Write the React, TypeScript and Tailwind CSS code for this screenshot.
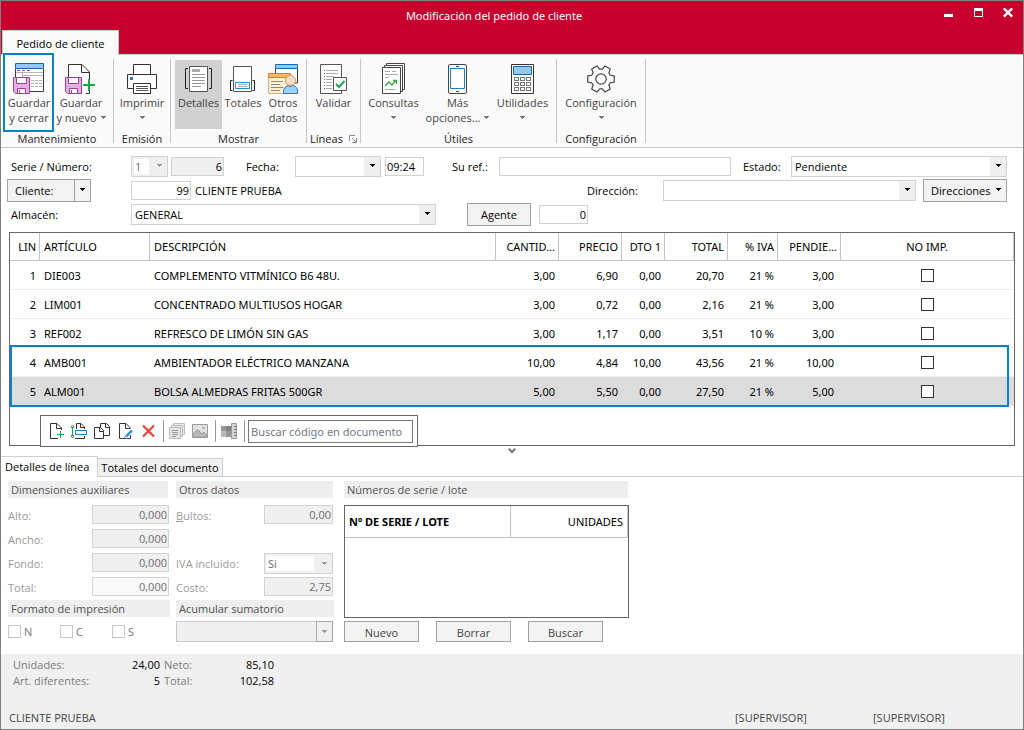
import type { ReactNode } from "react";

const GRAY_FIELD = "border-[#d2d2d2] bg-[#f0f0f0] text-[#6d6d6d]";

function Caret({ className = "" }: { className?: string }) {
  return (
    <svg width="5" height="4" viewBox="0 0 5 4" className={`shrink-0 fill-current ${className}`} aria-hidden="true">
      <path d="M0 0h5v1H4v1H3v1H2V2H1V1H0z" />
    </svg>
  );
}

/* ---------- Ribbon icons ---------- */

function Floppy() {
  return (
    <g stroke="#9b3f9b" fill="#dfb3dd">
      <path d="M.5 14.500H16.500V30.500H2.500L.500 28.500Z" />
      <path d="M3.500 14.500H13.500V20.500H3.500Z" fill="#fff" />
      <path d="M4.500 30.500V25.500H12.500V30.500Z" fill="#fff" />
      <path d="M6.500 27V30" />
    </g>
  );
}

function SaveCloseIcon() {
  return (
    <svg width="32" height="32" viewBox="0 0 32 32" fill="none" aria-hidden="true">
      <path d="M2.500 6V28.500H30.500V6" fill="#fff" stroke="#3a3a3a" />
      <path d="M2.500.5H30.500V5.500H2.500Z" fill="#92c9f0" stroke="#1466ad" />
      <path d="M4 7.500H7M9 7.500H12M14 7.500H17" stroke="#707070" />
      <path d="M3 9.500H30M9.500 10V14M9 12.500H30" stroke="#b5b5b5" />
      <path d="M18 17.500H29M18 20.500H29M18 23.500H29" stroke="#b0b0b0" strokeDasharray="3 1" />
      <Floppy />
    </svg>
  );
}

function SaveNewIcon() {
  return (
    <svg width="32" height="32" viewBox="0 0 32 32" fill="none" aria-hidden="true">
      <path d="M3.500 30V1.500H17L24.500 9V30H3.500Z" fill="#fff" />
      <path d="M3.500 14V1.500H17L24.500 9V16M21 30.500H24.500V28" stroke="#333" />
      <path d="M16.500 1.500V9.500H24.500" stroke="#333" />
      <path d="M24 16V28M18 22H30" stroke="#17a84b" strokeWidth="2" />
      <Floppy />
    </svg>
  );
}

function PrinterIcon() {
  return (
    <svg width="30" height="32" viewBox="0 0 30 32" fill="none" stroke="#333" aria-hidden="true">
      <path d="M6.500 11V1.500H23.500V11" fill="#fff" />
      <path d="M.5 11.500H29.500V25.500H.5Z" fill="#fff" />
      <path d="M6.500 20.500H23.500V30.500H6.500Z" fill="#fff" />
      <path d="M9 23.500H21M9 25.500H21M9 27.500H21" stroke="#555" />
      <path d="M3 14H6V17H3Z" fill="#1a7fd0" stroke="none" />
    </svg>
  );
}

function DetailIcon() {
  return (
    <svg width="32" height="32" viewBox="0 0 32 32" fill="none" stroke="#222" aria-hidden="true">
      <path d="M6.500 3.500H24.500V28.500H6.500Z" fill="#fff" stroke="#555" />
      <path d="M9 6H17V9H9Z" fill="#aaa" stroke="none" />
      <path d="M9 11.500H22M9 14.500H22M9 17.500H22M9 20.500H22M9 23.500H18" stroke="#999" />
      <path d="M5 5.500H2.500V25.500H5M26 5.500H28.500V25.500H26" />
    </svg>
  );
}

function TotalsIcon() {
  return (
    <svg width="30" height="32" viewBox="0 0 30 32" fill="none" stroke="#222" aria-hidden="true">
      <path d="M5.500 3.500H23.500V28.500H5.500Z" fill="#fff" stroke="#555" />
      <path d="M4.500 17.500H2.500V27.500H4.500M24.500 17.500H26.500V27.500H24.500" />
      <path d="M7.500 19.500H21.500V25.500H7.500Z" stroke="#1a90d8" />
      <path d="M10 21.500H19M10 23.500H19" stroke="#aaa" />
    </svg>
  );
}

function OtherDataIcon() {
  return (
    <svg width="31" height="32" viewBox="0 0 31 32" fill="none" aria-hidden="true">
      <path d="M7.500 6V20H29.500V6" fill="#fff" stroke="#3a3a3a" />
      <path d="M7.500 1.500H29.500V5.500H7.500Z" fill="#92c9f0" stroke="#1466ad" />
      <path d="M.5 14V30.500H22.500V14" fill="#fff0d2" stroke="#c9b48a" />
      <path d="M.5 10.500H22.500V14.500H.5Z" fill="#fdb56c" stroke="#e2742c" />
      <path d="M3 18.500H15M3 21.500H12M3 24.500H15M3 27.500H12" stroke="#888" />
      <circle cx="22.500" cy="17.500" r="5" fill="#fbdcc0" stroke="#dd9668" />
      <path d="M15.500 30.500V28Q16 23.500 20 22.500Q22.500 25 25 22.500Q29.500 23.500 29.500 28V30.500Z" fill="#a5cff0" stroke="#2c7cc0" />
    </svg>
  );
}

function ValidateIcon() {
  return (
    <svg width="28" height="32" viewBox="0 0 28 32" fill="none" stroke="#555" aria-hidden="true">
      <path d="M.5 1.500H21.500V30.500H.5Z" fill="#fff" />
      <path d="M6 7.500H18M6 10.500H18M6 13.500H14M6 16.500H12M6 19.500H12M6 22.500H12M6 25.500H12" stroke="#aaa" />
      <path d="M4 7.500H5M4 13.500H5M4 16.500H5M4 22.500H5" stroke="#189a44" />
      <path d="M4 10.500H5M4 19.500H5M4 25.500H5" stroke="#d11c35" />
      <path d="M13.500 14.500H26.500V27.500H13.500Z" fill="#fff" />
      <path d="M16 21L19 24L24.500 18" stroke="#1ba650" strokeWidth="2" />
    </svg>
  );
}

function QueriesIcon() {
  return (
    <svg width="24" height="32" viewBox="0 0 24 32" fill="#fff" stroke="#444" aria-hidden="true">
      <path d="M4.500.5H22.500V26.500H4.500Z" />
      <path d="M2.500 2.500H20.500V28.500H2.500Z" />
      <path d="M.5 4.500H18.500V30.500H.5Z" />
      <path d="M3 8.500H8M10 8.500H14M3 11.500H16M3 14.500H7M3 26.500H13" stroke="#aaa" />
      <path d="M3 23L7 19L10 22L14.500 17M11 17.500H14.500V21" fill="none" stroke="#35a844" strokeWidth="1.300" />
    </svg>
  );
}

function PhoneIcon() {
  return (
    <svg width="19" height="32" viewBox="0 0 19 32" fill="#fff" stroke="#444" aria-hidden="true">
      <rect x=".5" y="1.500" width="18" height="29" rx="1.500" />
      <path d="M2.500 5.500H16.500V25.500H2.500Z" stroke="#1a7fc4" />
      <path d="M8 3.500H11M8 28.500H11" />
    </svg>
  );
}

function CalculatorIcon() {
  return (
    <svg width="23" height="32" viewBox="0 0 23 32" fill="#fff" stroke="#333" aria-hidden="true">
      <path d="M.5 1.500H22.500V30.500H.5Z" />
      <path d="M2.500 3.500H20.500V11.500H2.500Z" fill="#92c9f0" stroke="#1466ad" />
      {[14.5, 19.5, 24.5].map((y) =>
        [3.5, 9.5, 15.5].map((x) => <rect key={`${x}-${y}`} x={x} y={y} width="4" height="3" stroke="#777" />),
      )}
    </svg>
  );
}

const gearPoints = Array.from({ length: 6 }, (_, tooth) =>
  [
    [10, -22],
    [13.6, -13],
    [13.6, 13],
    [10, 22],
  ].map(([radius, angle]) => {
    const rad = ((tooth * 60 + angle) * Math.PI) / 180;
    return `${(15 + radius * Math.cos(rad)).toFixed(2)},${(16 + radius * Math.sin(rad)).toFixed(2)}`;
  }),
)
  .flat()
  .join(" ");

function GearIcon() {
  return (
    <svg width="30" height="32" viewBox="0 0 30 32" fill="none" stroke="#444" strokeWidth="1.200" strokeLinejoin="round" aria-hidden="true">
      <polygon points={gearPoints} fill="#fff" />
      <circle cx="15" cy="16" r="5.200" />
    </svg>
  );
}

/* ---------- Line toolbar icons ---------- */

function NewLineIcon() {
  return (
    <svg width="15" height="18" viewBox="0 0 15 18" fill="none" stroke="#333" aria-hidden="true">
      <path d="M8 16.500H.5V1.500H7L11.500 6V8M6.500 1.500V6.500H11" />
      <path d="M10.500 9V16M7 12.500H14" stroke="#17a84b" />
    </svg>
  );
}

function InsertLineIcon() {
  return (
    <svg width="17" height="18" viewBox="0 0 17 18" fill="none" stroke="#333" aria-hidden="true">
      <path d="M4 16.500H13.500V14M5.500 7V1.500H10L13.500 5V7M9.500 1.500V5.500H13" />
      <path d="M1.500 5V14M0 5.500H3M0 13.500H3" stroke="#17a84b" />
      <path d="M0 5L1.500 3L3 5M0 14L1.500 16L3 14" stroke="#17a84b" />
      <path d="M4.500 8.500H15.500V12.500H4.500Z" fill="#fff" stroke="#1a7fc4" />
    </svg>
  );
}

function CopyLineIcon() {
  return (
    <svg width="17" height="18" viewBox="0 0 17 18" fill="#fff" stroke="#333" aria-hidden="true">
      <path d="M6.500 1.500H12.500L15.500 4.500V13.500H6.500Z" />
      <path d="M11.500 1.500V5.500H15.500" />
      <path d="M.5 5.500H6.500L9.500 8.500V16.500H.5Z" />
      <path d="M5.500 5.500V9.500H9.500" />
    </svg>
  );
}

function EditLineIcon() {
  return (
    <svg width="15" height="18" viewBox="0 0 15 18" fill="none" stroke="#333" aria-hidden="true">
      <path d="M.5 1.500H7L11.500 6V16.500H.5Z" />
      <path d="M6.500 1.500V6.500H11" />
      <path d="M6 15L13 8" stroke="#fff" strokeWidth="5" />
      <path d="M7 14.500L13 8.500" stroke="#3b95d6" strokeWidth="2.600" />
      <path d="M5 16.500L6.500 14" stroke="#3b95d6" />
    </svg>
  );
}

function DeleteLineIcon() {
  return (
    <svg width="14" height="14" viewBox="0 0 14 14" fill="none" stroke="#e8423f" strokeWidth="2.200" aria-hidden="true">
      <path d="M1 1.500L12 12.500M12 1.500L1 12.500" />
    </svg>
  );
}

function NotesIcon() {
  return (
    <svg width="16" height="16" viewBox="0 0 16 16" fill="#e6e6e6" stroke="#bdbdbd" aria-hidden="true">
      <path d="M4.500 .5H15.500V11.500H4.500Z" />
      <path d="M2.500 2.500H13.500V13.500H2.500Z" />
      <path d="M.5 4.500H11.500V15.500H.5Z" />
      <path d="M3 7.500H9M3 9.500H9M3 11.500H9M3 13.500H7" stroke="#999" />
    </svg>
  );
}

function ImageIcon() {
  return (
    <svg width="16" height="14" viewBox="0 0 16 14" fill="#e2e2e2" stroke="#9c9c9c" aria-hidden="true">
      <path d="M.5 .5H15.500V13.500H.5Z" />
      <path d="M1 10L5.500 5.500L10 10L12 8L15 11V13H1Z" fill="#b8b8b8" />
      <circle cx="11.500" cy="4" r="1.300" fill="#b0b0b0" stroke="none" />
    </svg>
  );
}

function SizesIcon() {
  return (
    <svg width="17" height="16" viewBox="0 0 17 16" fill="none" aria-hidden="true">
      <path d="M0 3H10V14H0Z" fill="#999" />
      <path d="M0 8H5V14H0Z" fill="#bbb" />
      <path d="M5 3H10V8H5Z" fill="#828282" />
      <path d="M10.500 .5H15.500V15.500H10.500Z" fill="#d4d4d4" stroke="#999" />
      <path d="M13 3.500H15M13 6.500H15M13 9.500H15M13 12.500H15" stroke="#777" />
    </svg>
  );
}

/* ---------- Ribbon ---------- */

function RibbonButton({
  icon,
  lines,
  menu = false,
  active = false,
  className,
}: {
  icon: ReactNode;
  lines: string[];
  menu?: boolean;
  active?: boolean;
  className: string;
}) {
  const alone = menu && lines.length === 1;
  return (
    <button
      type="button"
      className={`flex h-[69px] flex-col items-center whitespace-nowrap pt-[3px] leading-[15px] text-[#444] ${active ? "bg-[#d1d1d1]" : ""} ${className}`}
    >
      <span className="flex h-8 items-start">{icon}</span>
      <span>{lines[0]}</span>
      {lines.length > 1 && (
        <span className="flex items-center gap-1">
          {lines[1]}
          {menu && <Caret className="text-[#777]" />}
        </span>
      )}
      {alone && (
        <span className="flex h-[15px] items-center">
          <Caret className="text-[#777]" />
        </span>
      )}
    </button>
  );
}

function RibbonGroup({ title, className, children, launcher = false }: { title: string; className: string; children: ReactNode; launcher?: boolean }) {
  return (
    <section className="flex">
      <div className={`flex flex-col pt-[5px] ${className}`}>
        <div className="flex justify-center">{children}</div>
        <div className="flex items-center justify-center gap-1.5 pt-0.5 leading-[15px] text-[#222]">
          {title}
          {launcher && (
            <svg width="8" height="8" viewBox="0 0 8 8" fill="none" stroke="#8a8a8a" aria-hidden="true">
              <path d="M.5 6V.5H6M3 3L7 7M7.500 3V7.500H3" />
            </svg>
          )}
        </div>
      </div>
      <div className="my-1 w-px bg-[#c6c6c6]" />
    </section>
  );
}

/* ---------- Form controls ---------- */

function Dropdown({
  id,
  value,
  label,
  className,
  disabled = false,
}: {
  id: string;
  value: string;
  label?: string;
  className: string;
  disabled?: boolean;
}) {
  return (
    <div className={`relative flex h-[21px] border border-[#d2d2d2] ${disabled ? "bg-[#f0f0f0] p-0.5 text-[#6d6d6d]" : "bg-white text-black"} ${className}`}>
      <select
        id={id}
        aria-label={label}
        disabled={disabled}
        className={`w-full appearance-none opacity-100 outline-none ${disabled ? "mr-4 bg-white pl-px" : "pr-4 pl-[3px]"}`}
      >
        <option>{value}</option>
      </select>
      <span
        className={`pointer-events-none absolute inset-y-0 right-0 flex w-4 items-center justify-center bg-[#efefef] ${disabled ? "text-[#999]" : "text-black"}`}
      >
        <Caret />
      </span>
    </div>
  );
}

function NumberField({ id, value, label, className, readOnly }: { id: string; value: string; label?: string; className: string; readOnly?: boolean }) {
  return (
    <input
      id={id}
      aria-label={label}
      defaultValue={value}
      readOnly={readOnly}
      className={`border px-px text-right outline-none ${className}`}
    />
  );
}

const WHITE_FIELD = "border-[#d2d2d2] bg-white text-black";
const PUSH = "border border-[#a0a0a0] bg-[#f3f3f3]";

/* ---------- Order lines ---------- */

const lines = [
  ["1", "DIE003", "COMPLEMENTO VITMÍNICO B6 48U.", "3,00", "6,90", "0,00", "20,70", "21 %", "3,00"],
  ["2", "LIM001", "CONCENTRADO MULTIUSOS HOGAR", "3,00", "0,72", "0,00", "2,16", "21 %", "3,00"],
  ["3", "REF002", "REFRESCO DE LIMÓN SIN GAS", "3,00", "1,17", "0,00", "3,51", "10 %", "3,00"],
  ["4", "AMB001", "AMBIENTADOR ELÉCTRICO MANZANA", "10,00", "4,84", "10,00", "43,56", "21 %", "10,00"],
  ["5", "ALM001", "BOLSA ALMEDRAS FRITAS 500GR", "5,00", "5,50", "0,00", "27,50", "21 %", "5,00"],
];

const columns = [
  { title: "LIN", width: "w-[30px]", right: true },
  { title: "ARTÍCULO", width: "w-[110px]", right: false },
  { title: "DESCRIPCIÓN", width: "", right: false },
  { title: "CANTID...", width: "w-[63px]", right: true },
  { title: "PRECIO", width: "w-[63px]", right: true },
  { title: "DTO 1", width: "w-[43px]", right: true },
  { title: "TOTAL", width: "w-[63px]", right: true },
  { title: "% IVA", width: "w-[50px]", right: true },
  { title: "PENDIE...", width: "w-[63px]", right: true },
];

function OrderLines() {
  return (
    <div className="relative mx-[8px] mt-1.5 h-[214px] border border-[#666]">
      <table className="w-full table-fixed border-separate border-spacing-0 font-['Noto_Sans',sans-serif] leading-none">
        <thead>
          <tr className="h-[28px]">
            {columns.map((c) => (
              <th
                key={c.title}
                className={`border-r border-b border-[#c4c4c4] py-0 font-normal whitespace-nowrap ${c.width} ${c.right ? "pr-[3px] text-right" : "px-1 text-left"}`}
              >
                {c.title}
              </th>
            ))}
            <th className="w-[173px] border-r border-b border-[#c4c4c4] p-0 text-center font-normal">NO IMP.</th>
          </tr>
        </thead>
        <tbody>
          {lines.map((row, i) => (
            <tr key={row[0]} className={`h-[29px] ${i === 4 ? "bg-[#dcdcdc]" : ""}`}>
              {row.map((cell, c) => (
                <td
                  key={c}
                  className={`border-b border-[#ededed] py-0 whitespace-nowrap ${columns[c].right ? "text-right" : "text-left"} ${c === 8 ? "pr-[7px]" : "px-1"}`}
                >
                  {cell}
                </td>
              ))}
              <td className="border-b border-[#ededed] p-0">
                <input
                  type="checkbox"
                  aria-label={`No imprimir línea ${row[0]}`}
                  className="mx-auto block size-[13px] appearance-none border border-[#333] bg-white"
                />
              </td>
            </tr>
          ))}
        </tbody>
      </table>

      <div className="pointer-events-none absolute inset-x-0 top-[112px] mr-[5px] h-[62px] border-2 border-[#0a80c6]" />

      <div className="absolute top-[182px] left-[30px] flex h-[32px] items-center border border-[#666] bg-white pr-1 pl-[9px]">
        <button type="button" aria-label="Nueva línea" className="mr-1.5"><NewLineIcon /></button>
        <button type="button" aria-label="Insertar línea" className="mr-1.5"><InsertLineIcon /></button>
        <button type="button" aria-label="Duplicar línea" className="mr-2"><CopyLineIcon /></button>
        <button type="button" aria-label="Editar línea" className="mr-2"><EditLineIcon /></button>
        <button type="button" aria-label="Borrar línea" className="mr-[7px]"><DeleteLineIcon /></button>
        <span className="mr-[5px] h-[22px] w-px bg-[#999]" />
        <button type="button" aria-label="Notas" className="mr-[7px]"><NotesIcon /></button>
        <button type="button" aria-label="Imagen" className="mr-[7px]"><ImageIcon /></button>
        <span className="mr-[5px] h-[22px] w-px bg-[#999]" />
        <button type="button" aria-label="Tallas" className="mr-1.5"><SizesIcon /></button>
        <span className="mr-[3px] h-[22px] w-px bg-[#999]" />
        <input
          aria-label="Buscar código en documento"
          placeholder="Buscar código en documento"
          className="h-[23px] w-[165px] border border-[#777] px-0.5 font-['Noto_Sans',sans-serif] outline-none placeholder:text-[#717a86]"
        />
      </div>
    </div>
  );
}

/* ---------- Line details ---------- */

function Heading({ children, className = "" }: { children: ReactNode; className?: string }) {
  return <h2 className={`h-[17px] bg-[#eee] px-[3px] leading-[17px] text-[#505050] ${className}`}>{children}</h2>;
}

function DetailRow({ id, label, children }: { id: string; label: ReactNode; children: ReactNode }) {
  return (
    <div className="flex h-6 items-start justify-between">
      <label htmlFor={id} className="pt-0.5 leading-[17px] text-[#9a9a9a]">
        {label}
      </label>
      {children}
    </div>
  );
}

function LineDetails() {
  return (
    <div className="flex h-[177px] pt-1 pl-[7px]">
      <div className="w-[162px]">
        <Heading className="mr-0.5">Dimensiones auxiliares</Heading>
        <div className="mt-[7px] pr-px">
          {["Alto", "Ancho", "Fondo", "Total"].map((name) => (
            <DetailRow key={name} id={name} label={`${name}:`}>
              <NumberField
                id={name}
                value="0,000"
                readOnly
                className={`h-[19px] w-[77px] border-[#d2d2d2] text-[#6d6d6d] ${name === "Total" ? "bg-[#fafafa]" : "bg-[#f0f0f0]"}`}
              />
            </DetailRow>
          ))}
        </div>
        <Heading className="-mt-px">Formato de impresión</Heading>
        <div className="mt-2 flex">
          {["N", "C", "S"].map((name) => (
            <label key={name} className="flex h-[13px] w-[52px] items-center gap-[3px] leading-[13px] text-[#777]">
              <input type="checkbox" className="size-[13px] appearance-none border border-[#c8c8c8] bg-white" />
              {name}
            </label>
          ))}
        </div>
      </div>

      <div className="ml-1.5 w-[158px]">
        <Heading className="mr-px">Otros datos</Heading>
        <div className="mt-[7px] pr-px">
          <DetailRow id="bultos" label={<><span className="underline">B</span>ultos:</>}>
            <NumberField id="bultos" value="0,00" readOnly className={`h-[19px] w-[69px] ${GRAY_FIELD}`} />
          </DetailRow>
          <div className="h-6" />
          <DetailRow id="iva" label="IVA incluido:">
            <Dropdown id="iva" value="Si" disabled className="w-[69px]" />
          </DetailRow>
          <DetailRow id="costo" label="Costo:">
            <NumberField id="costo" value="2,75" readOnly className={`h-[19px] w-[69px] ${GRAY_FIELD}`} />
          </DetailRow>
        </div>
        <Heading className="-mt-px">Acumular sumatorio</Heading>
        <div className="relative mt-1 mr-px flex h-[21px]">
          <select aria-label="Acumular sumatorio" disabled className="w-full appearance-none border border-[#c8c8c8] bg-[#f0f0f0] opacity-100" />
          <span className="pointer-events-none absolute inset-y-0 right-0 flex w-[17px] items-center justify-center border border-[#a8a8a8] bg-[#f0f0f0] text-[#999]">
            <Caret />
          </span>
        </div>
      </div>

      <div className="ml-2.5 w-[285px]">
        <Heading className="mr-px">Números de serie / lote</Heading>
        <div className="mt-[7px] h-[113px] border border-[#666]">
          <table className="w-full table-fixed border-separate border-spacing-0 font-['Noto_Sans',sans-serif] leading-none">
            <thead>
              <tr className="h-8">
                <th className="w-[166px] border-r border-b border-[#c4c4c4] px-1 py-0 text-left font-bold">Nº DE SERIE / LOTE</th>
                <th className="border-r border-b border-[#c4c4c4] px-1 py-0 text-right font-normal">UNIDADES</th>
              </tr>
            </thead>
          </table>
        </div>
        <div className="mt-[3px] flex gap-[17px]">
          {["Nuevo", "Borrar", "Buscar"].map((name) => (
            <button key={name} type="button" className={`h-[21px] w-[75px] pt-px text-[#444] ${PUSH}`}>
              {name}
            </button>
          ))}
        </div>
      </div>
    </div>
  );
}

/* ---------- Window ---------- */

export default function App() {
  return (
    <div className="flex min-h-screen flex-col border border-[#7f7f7f] bg-white font-['Open_Sans','Noto_Sans',sans-serif] text-[11px] leading-[15px] text-black">
      <header className="relative flex h-[53px] flex-col justify-between bg-[#c8002d]">
        <h1 className="pt-1.5 pr-9 text-center font-['Noto_Sans',sans-serif] leading-[18px] text-white">Modificación del pedido de cliente</h1>
        <div className="absolute top-[7px] right-[10px] flex text-white">
          <button type="button" aria-label="Minimizar" className="mr-[21px]">
            <svg width="9" height="10" viewBox="0 0 9 10" fill="currentColor" aria-hidden="true"><path d="M0 6H9V9H0Z" /></svg>
          </button>
          <button type="button" aria-label="Maximizar" className="mr-[20px]">
            <svg width="9" height="10" viewBox="0 0 9 10" fill="currentColor" fillRule="evenodd" aria-hidden="true"><path d="M0 0H9V9H0ZM1 3H8V8H1Z" /></svg>
          </button>
          <button type="button" aria-label="Cerrar">
            <svg width="10" height="10" viewBox="0 0 10 10" fill="none" stroke="currentColor" strokeWidth="2.400" aria-hidden="true"><path d="M.8 .3L9.200 8.700M9.200 .3L.8 8.700" /></svg>
          </button>
        </div>
        <nav className="flex">
          <button type="button" className="relative z-10 -mb-px ml-px h-[25px] w-[117px] border border-b-0 border-[#c6c6c6] bg-[#fafafa] text-center">
            Pedido de cliente
          </button>
        </nav>
      </header>

      <div className="relative flex h-[94px] border-y border-[#c6c6c6] bg-[#fafafa]">
        <RibbonGroup title="Mantenimiento" className="w-[112px]">
          <RibbonButton icon={<SaveCloseIcon />} lines={["Guardar", "y cerrar"]} className="w-[52px]" />
          <RibbonButton icon={<SaveNewIcon />} lines={["Guardar", "y nuevo"]} menu className="mr-1 w-[52px]" />
        </RibbonGroup>
        <RibbonGroup title="Emisión" className="w-[56px]">
          <RibbonButton icon={<PrinterIcon />} lines={["Imprimir"]} menu className="w-[54px]" />
        </RibbonGroup>
        <RibbonGroup title="Mostrar" className="w-[135px]">
          <RibbonButton icon={<DetailIcon />} lines={["Detalles"]} active className="w-[47px]" />
          <RibbonButton icon={<TotalsIcon />} lines={["Totales"]} className="w-[42px]" />
          <RibbonButton icon={<OtherDataIcon />} lines={["Otros", "datos"]} className="w-[38px]" />
        </RibbonGroup>
        <RibbonGroup title="Líneas" className="w-[53px]" launcher>
          <RibbonButton icon={<ValidateIcon />} lines={["Validar"]} className="w-[50px]" />
        </RibbonGroup>
        <RibbonGroup title="Útiles" className="w-[195px]">
          <RibbonButton icon={<QueriesIcon />} lines={["Consultas"]} menu className="w-[58px]" />
          <RibbonButton icon={<PhoneIcon />} lines={["Más", "opciones..."]} menu className="w-[70px]" />
          <RibbonButton icon={<CalculatorIcon />} lines={["Utilidades"]} menu className="w-[60px]" />
        </RibbonGroup>
        <RibbonGroup title="Configuración" className="w-[88px]">
          <RibbonButton icon={<GearIcon />} lines={["Configuración"]} menu className="w-[84px]" />
        </RibbonGroup>
        <div className="pointer-events-none absolute -top-[2px] left-[2px] z-20 h-[79px] w-[51px] border-2 border-[#0a80c6]" />
      </div>

      <form className="pt-1.5 pr-4 pl-1.5">
        <div className="flex h-6 items-center">
          <label htmlFor="serie" className="w-[124px] pl-1">Serie / Número:</label>
          <Dropdown id="serie" value="1" disabled className="w-[37px]" />
          <NumberField id="numero" label="Número" value="6" readOnly className="ml-[3px] h-[19px] w-[53px] border-[#d2d2d2] bg-[#f0f0f0] text-black" />
          <label htmlFor="fecha" className="ml-[22px] w-[49px]">Fecha:</label>
          <Dropdown id="fecha" value="" className="w-[86px]" />
          <input aria-label="Hora" defaultValue="09:24" className={`ml-1 h-[19px] w-[39px] border px-px ${WHITE_FIELD}`} />
          <label htmlFor="ref" className="ml-7 w-[47px]">Su ref.:</label>
          <input id="ref" className={`h-[19px] min-w-0 flex-1 border ${WHITE_FIELD}`} />
          <label htmlFor="estado" className="ml-3 w-12">Estado:</label>
          <Dropdown id="estado" value="Pendiente" className="w-[216px]" />
        </div>
        <div className="flex h-6 items-center">
          <div className={`flex h-[23px] w-[84px] ${PUSH}`}>
            <button type="button" className="flex-1 pl-[7px] text-left">Cliente:</button>
            <button type="button" aria-label="Más opciones de cliente" className="flex w-4 items-center justify-center border-l border-[#a0a0a0]"><Caret /></button>
          </div>
          <NumberField id="cliente" label="Código de cliente" value="99" className={`ml-10 h-[19px] w-[60px] ${WHITE_FIELD}`} />
          <span className="ml-1 flex-1">CLIENTE PRUEBA</span>
          <label htmlFor="direccion" className="w-[76px]">Dirección:</label>
          <Dropdown id="direccion" value="" className="w-[253px]" />
          <button type="button" className={`ml-[7px] flex h-[23px] w-[84px] items-center justify-between pr-[5px] pl-[7px] ${PUSH}`}>
            Direcciones <Caret />
          </button>
        </div>
        <div className="flex h-6 items-center">
          <label htmlFor="almacen" className="w-[124px] pl-1">Almacén:</label>
          <Dropdown id="almacen" value="GENERAL" className="w-[305px]" />
          <button type="button" className={`ml-[31px] h-[23px] w-[64px] ${PUSH}`}>Agente</button>
          <NumberField id="agente" label="Código de agente" value="0" className={`ml-2 h-[19px] w-[49px] ${WHITE_FIELD}`} />
        </div>
      </form>

      <OrderLines />

      <button type="button" aria-label="Contraer panel" className="mx-auto mt-0.5 flex h-2 items-start">
        <svg width="8" height="6" viewBox="0 0 8 6" fill="none" stroke="#777" strokeWidth="2" aria-hidden="true"><path d="M.7 .7L4 4L7.300 .7" /></svg>
      </button>

      <div className="flex h-[21px] items-end border-b border-[#d0d0d0]">
        <button type="button" className="-mb-px h-[21px] w-[97px] border border-b-0 border-l-0 border-[#d0d0d0] bg-white pb-0.5 text-left pl-1 whitespace-nowrap">Detalles de línea</button>
        <button type="button" className="h-[18px] w-[125px] border border-b-0 border-l-0 border-[#d0d0d0] bg-[#f0f0f0] whitespace-nowrap">Totales del documento</button>
      </div>

      <LineDetails />

      <footer className="flex flex-1 flex-col justify-between bg-[#f0f0f0] pt-[3px] pb-1">
        <dl className="grid grid-cols-[92px_55px_40px_74px] gap-x-0 pl-3 leading-4 text-[#7a7a7a]">
          <dt>Unidades:</dt>
          <dd className="text-right text-black">24,00</dd>
          <dt className="pl-1">Neto:</dt>
          <dd className="text-right text-black">85,10</dd>
          <dt>Art. diferentes:</dt>
          <dd className="text-right text-black">5</dd>
          <dt className="pl-1">Total:</dt>
          <dd className="text-right text-black">102,58</dd>
        </dl>
        <div className="flex pl-2 text-[#444]">
          <span className="flex-1">CLIENTE PRUEBA</span>
          <span className="w-[138px]">[SUPERVISOR]</span>
          <span className="w-[150px]">[SUPERVISOR]</span>
        </div>
      </footer>
    </div>
  );
}
